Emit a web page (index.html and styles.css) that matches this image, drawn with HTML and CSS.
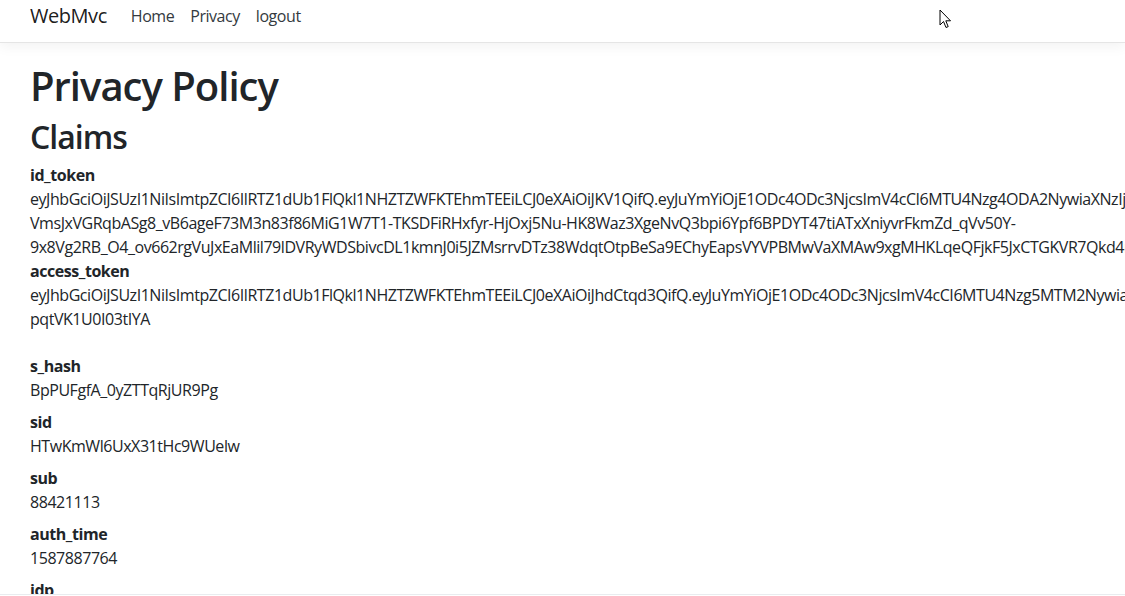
FILE: index.html
```html
<!DOCTYPE html>
<html lang="en">
<head>
    <meta charset="UTF-8">
    <meta name="viewport" content="width=device-width, initial-scale=1.0">
    <title>Privacy Policy - WebMvc</title>
    <link rel="stylesheet" href="styles.css">
</head>
<body>
    <header class="navbar">
        <a class="brand" href="#">WebMvc</a>
        <nav class="nav">
            <a href="#">Home</a>
            <a href="#">Privacy</a>
            <a href="#">logout</a>
        </nav>
        <svg class="cursor" width="13" height="20" viewBox="0 0 13 20">
            <path d="M1 1 L1 16 L4.5 12.5 L7 18.5 L9.2 17.6 L6.8 11.8 L11.5 11.8 Z" fill="#fff" stroke="#000" stroke-width="1" stroke-linejoin="round"/>
        </svg>
    </header>

    <main class="container">
        <h1>Privacy Policy</h1>
        <h2>Claims</h2>

        <div class="tokens">
            <div class="label">id_token</div>
            <div class="value">eyJhbGciOiJSUzI1NiIsImtpZCI6IlRTZ1dUb1FlQkl1NHZTZWFKTEhmTEEiLCJ0eXAiOiJKV1QifQ.eyJuYmYiOjE1ODc4ODc3NjcsImV4cCI6MTU4Nzg4ODA2NywiaXNzIjoiaHR0cHM6Ly9sb2NhbGhvc3Q6NTAwMSIsImF1ZCI6IndlYm12YyIsIm5vbmNlIjoiNjM3MjM0ODQ1NjQ5MDQ1NTg3-VmsJxVGRqbASg8_vB6ageF73M3n83f86MiG1W7T1-TKSDFiRHxfyr-HjOxj5Nu-HK8Waz3XgeNvQ3bpi6Ypf6BPDYT47tiATxXniyvrFkmZd_qVv50Y-9x8Vg2RB_O4_ov662rgVuJxEaMlil79lDVRyWDSbivcDL1kmnJ0i5JZMsrrvDTz38WdqtOtpBeSa9EChyEapsVYVPBMwVaXMAw9xgMHKLqeQFjkF5JxCTGKVR7Qkd4mQz8WpLr2yYhT0sN1cVbXg</div>
            <div class="label">access_token</div>
            <div class="value">eyJhbGciOiJSUzI1NiIsImtpZCI6IlRTZ1dUb1FlQkl1NHZTZWFKTEhmTEEiLCJ0eXAiOiJhdCtqd3QifQ.eyJuYmYiOjE1ODc4ODc3NjcsImV4cCI6MTU4Nzg5MTM2NywiaXNzIjoiaHR0cHM6Ly9sb2NhbGhvc3Q6NTAwMSIsImNsaWVudF9pZCI6IndlYm12YyIsInN1YiI6Ijg4NDIxMTEzIn0.Qm7x-pqtVK1U0I03tIYA</div>
        </div>

        <dl class="claims">
            <dt>s_hash</dt>
            <dd>BpPUFgfA_0yZTTqRjUR9Pg</dd>
            <dt>sid</dt>
            <dd>HTwKmWl6UxX31tHc9WUelw</dd>
            <dt>sub</dt>
            <dd>88421113</dd>
            <dt>auth_time</dt>
            <dd>1587887764</dd>
            <dt>idp</dt>
            <dd>local</dd>
        </dl>
    </main>

    <footer class="footer"></footer>
</body>
</html>
```

FILE: styles.css
```css
html, body {
    overflow: hidden;
}
body {
    margin: 0;
    font-family: "Open Sans", "Noto Sans", sans-serif;
    font-size: 16px;
    line-height: 24px;
    letter-spacing: -0.45px;
    color: #212529;
    background-color: #fff;
}
a {
    text-decoration: none;
}
.navbar {
    position: relative;
    display: flex;
    align-items: center;
    height: 42px;
    padding: 0 30px;
    background: #fff;
    border-bottom: 1px solid #e5e5e5;
    box-shadow: 0 4px 12px rgba(0, 0, 0, 0.05);
}
.brand {
    font-size: 20px;
    color: rgba(0, 0, 0, 0.9);
    margin-top: -10px;
    margin-right: 16px;
}
.nav {
    display: flex;
    margin-top: -10px;
}
.nav a {
    color: #343a40;
    padding: 0 8px;
}
.cursor {
    position: absolute;
    left: 939px;
    top: 9px;
}
.container {
    padding: 19px 30px 0;
}
h1, h2 {
    margin: 0 0 8px;
    font-weight: 600;
    line-height: 1.2;
    letter-spacing: -1px;
}
h1 {
    font-size: 40px;
}
h2 {
    font-size: 32px;
    margin-bottom: 7px;
}
.tokens {
    margin-bottom: 23px;
}
.label, dt {
    font-weight: 700;
}
.claims {
    margin: 0;
}
.claims dd {
    margin: 0 0 8px;
}
.footer {
    position: fixed;
    left: 0;
    right: 0;
    bottom: 0;
    height: 1px;
    background: #fff;
    border-top: 1px solid #e9ecef;
}
```
